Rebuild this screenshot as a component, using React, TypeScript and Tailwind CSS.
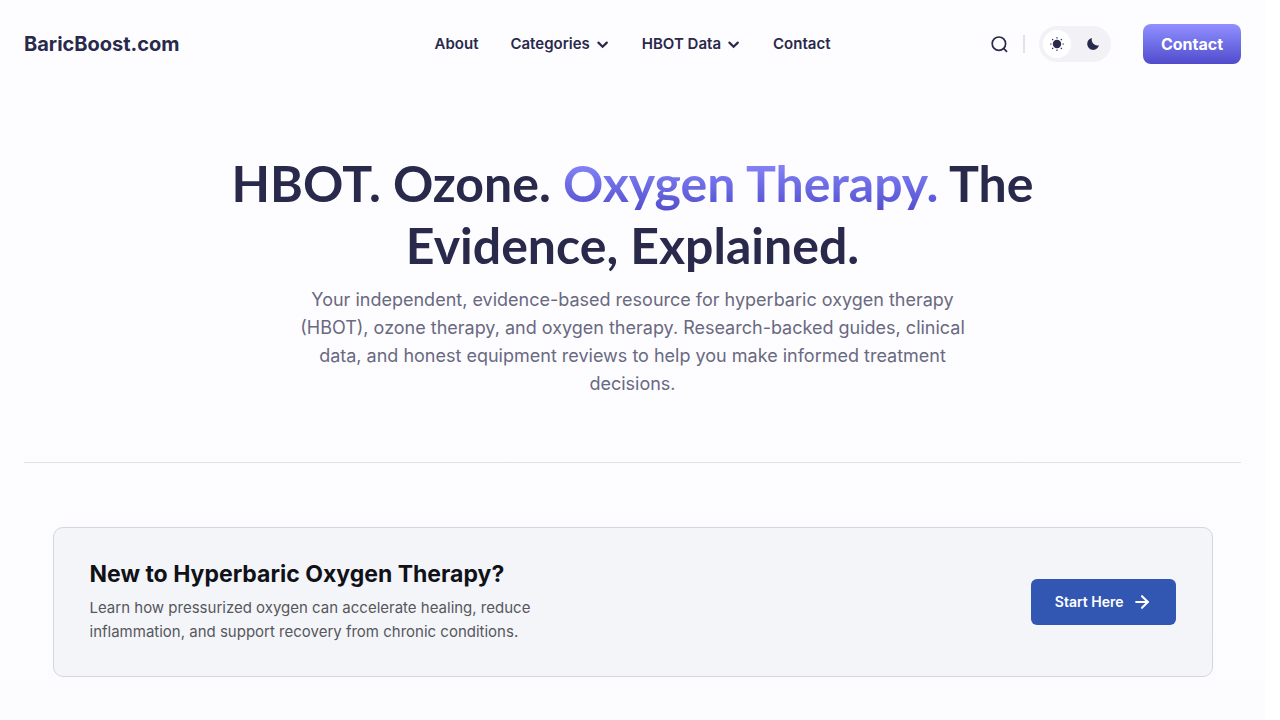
import { ArrowRight } from "lucide-react";

const navItems = [
  { label: "About", hasMenu: false },
  { label: "Categories", hasMenu: true },
  { label: "HBOT Data", hasMenu: true },
  { label: "Contact", hasMenu: false },
];

const rays = [0, 45, 90, 135, 180, 225, 270, 315];

function SearchIcon() {
  return (
    <svg viewBox="0 0 20 20" className="w-5 h-5" fill="none" stroke="currentColor" strokeWidth="1.7">
      <circle cx="9.9" cy="9.7" r="6.7" />
      <path d="M14.6 14.4 18 17.8" />
    </svg>
  );
}

function ChevronIcon() {
  return (
    <svg viewBox="0 0 14 14" className="w-3.5 h-3.5" fill="none" stroke="currentColor" strokeWidth="2.2">
      <path d="M2.4 5.6 6.6 9.8 10.8 5.6" strokeLinecap="round" />
    </svg>
  );
}

function SunIcon() {
  return (
    <svg viewBox="0 0 14 14" className="w-3.5 h-3.5" fill="currentColor">
      <circle cx="7" cy="7" r="4.2" />
      {rays.map((angle) => (
        <rect key={angle} x="6.4" y="0.1" width="1.2" height="1.5" rx="0.4" transform={`rotate(${angle} 7 7)`} />
      ))}
    </svg>
  );
}

function MoonIcon() {
  return (
    <svg viewBox="0 0 14 14" className="w-3.5 h-3.5" fill="currentColor">
      <path d="M5.9 1.1C3.2 1.7 1.2 4 1.2 6.900a6 6 0 0 0 6 6c2.900 0 5.200-2 5.800-4.700C8.600 9.300 4.800 5.600 5.900 1.100Z" />
    </svg>
  );
}

function Header() {
  return (
    <header className="grid grid-cols-[1fr_auto_1fr] items-center h-22 px-6 text-[#29294b]">
      <a href="#" className="text-xl font-bold">
        BaricBoost.com
      </a>

      <nav className="flex items-center gap-8">
        {navItems.map((item) => (
          <a key={item.label} href="#" className="flex items-center gap-1.5 text-[15px] leading-6 font-semibold">
            {item.label}
            {item.hasMenu && <ChevronIcon />}
          </a>
        ))}
      </nav>

      <div className="flex items-center justify-end">
        <button type="button" aria-label="Search">
          <SearchIcon />
        </button>
        <span className="w-0.5 h-[18px] mx-3.5 bg-[#e1e1e9]" />
        <button
          type="button"
          aria-label="Toggle dark mode"
          className="flex items-center gap-2 h-9 w-18 p-1 mr-8 rounded-full bg-[#f2f2f6]"
        >
          <span className="flex items-center justify-center w-7 h-7 rounded-full bg-white">
            <SunIcon />
          </span>
          <span className="flex items-center justify-center w-7 h-7">
            <MoonIcon />
          </span>
        </button>
        <a
          href="#"
          className="flex items-center h-10 px-[18px] rounded-lg bg-linear-to-b from-[#9290ff] to-[#514bcd] text-base font-bold text-white"
        >
          Contact
        </a>
      </div>
    </header>
  );
}

function Hero() {
  return (
    <section className="mx-6 pt-16 pb-16 border-b border-[#e1e1e6] text-center">
      <h1 className="max-w-[860px] mx-auto font-['Lato',sans-serif] text-[50px] leading-[62px] font-bold text-[#29294b]">
        HBOT. Ozone.{" "}
        <span className="bg-linear-to-b from-[#9290ff] to-[#514bcd] bg-clip-text text-transparent">
          Oxygen Therapy.
        </span>{" "}
        The
        <br />
        Evidence, Explained.
      </h1>
      <p className="max-w-[680px] mx-auto mt-2.5 text-lg leading-7 text-[#696981]">
        Your independent, evidence-based resource for hyperbaric oxygen therapy (HBOT), ozone therapy, and oxygen
        therapy. Research-backed guides, clinical data, and honest equipment reviews to help you make informed treatment
        decisions.
      </p>
    </section>
  );
}

function StartBanner() {
  return (
    <section className="px-6 py-16">
      <div className="flex items-center justify-between max-w-[1160px] mx-auto px-9 py-8 rounded-[10px] border border-[#d4d6dc] bg-[#f3f5f9]">
        <div className="max-w-[480px]">
          <h2 className="text-[23px] leading-7 font-bold text-[#111118]">New to Hyperbaric Oxygen Therapy?</h2>
          <p className="mt-2 text-[15px] leading-6 text-[#57575c]">
            Learn how pressurized oxygen can accelerate healing, reduce
            <br />
            inflammation, and support recovery from chronic conditions.
          </p>
        </div>
        <a
          href="#"
          className="flex items-center gap-2 h-[46px] px-6 rounded-md bg-[#3157b2] text-sm font-semibold text-white"
        >
          Start Here
          <ArrowRight className="w-5 h-5" strokeWidth={2.5} />
        </a>
      </div>
    </section>
  );
}

export default function App() {
  return (
    <div className="pr-[15px] bg-white font-['Inter',sans-serif]">
      <div className="min-h-screen bg-linear-to-b from-[#fdfdff] to-[#fcfcfe]">
        <Header />
        <main>
          <Hero />
          <StartBanner />
        </main>
      </div>
    </div>
  );
}
